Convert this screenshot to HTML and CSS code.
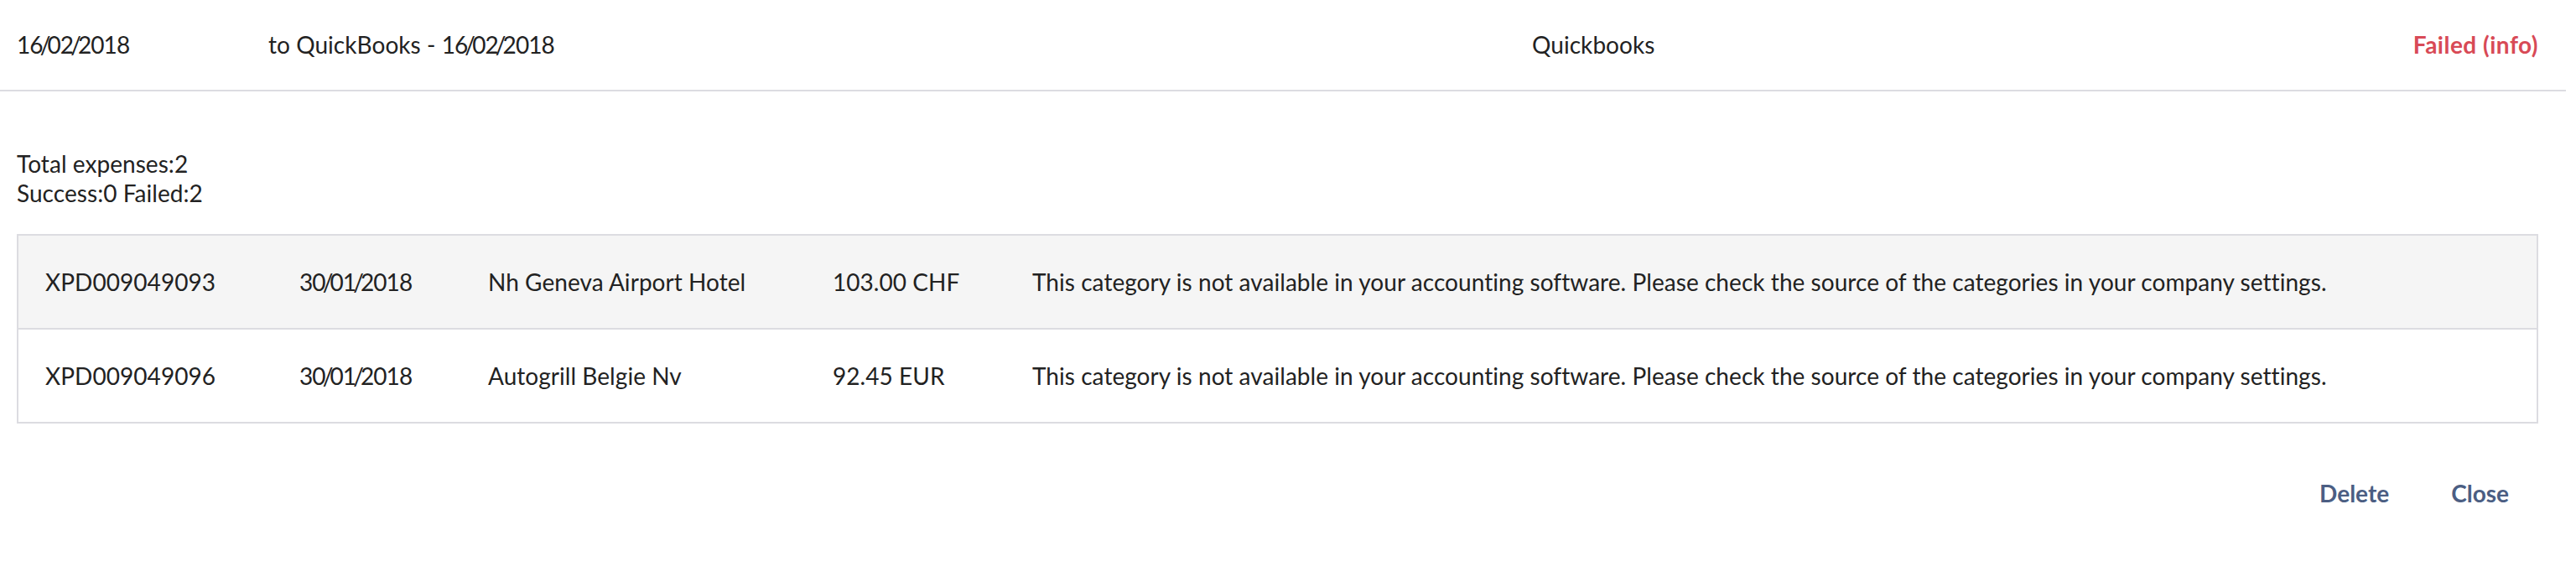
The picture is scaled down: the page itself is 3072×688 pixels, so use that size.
FILE: index.html
```html
<!DOCTYPE html>
<html>
<head>
<meta charset="utf-8">
<link rel="stylesheet" href="styles.css">
</head>
<body>
<div class="page">
  <div class="export-row">
    <div class="cell"><span class="date">16<span class="sl">/</span>02<span class="sl">/</span>2018</span></div>
    <div class="cell">to QuickBooks - <span class="date">16<span class="sl">/</span>02<span class="sl">/</span>2018</span></div>
    <div class="cell">Quickbooks</div>
    <div class="cell status">Failed (info)</div>
  </div>
  <div class="details">
    <div class="summary">
      <div>Total expenses:2</div>
      <div>Success:0 Failed:2</div>
    </div>
    <div class="table">
      <div class="row shaded">
        <div>XPD009049093</div>
        <div><span class="date">30<span class="sl">/</span>01<span class="sl">/</span>2018</span></div>
        <div>Nh Geneva Airport Hotel</div>
        <div>103.00 CHF</div>
        <div>This category is not available in your accounting software. Please check the source of the categories in your company settings.</div>
      </div>
      <div class="row">
        <div>XPD009049096</div>
        <div><span class="date">30<span class="sl">/</span>01<span class="sl">/</span>2018</span></div>
        <div>Autogrill Belgie Nv</div>
        <div>92.45 EUR</div>
        <div>This category is not available in your accounting software. Please check the source of the categories in your company settings.</div>
      </div>
    </div>
    <div class="actions">
      <button class="btn">Delete</button>
      <button class="btn">Close</button>
    </div>
  </div>
</div>
</body>
</html>
```
FILE: styles.css
```css
html, body {
  margin: 0;
  padding: 0;
  background: #ffffff;
}
body {
  font-family: Lato, "Liberation Sans", sans-serif;
  font-size: 28px;
  color: #222222;
  letter-spacing: 0.05px;
}
.date {
  letter-spacing: -0.9px;
}
.sl {
  margin: 0 -3px;
}
.page {
  width: 3060px;
}
.export-row {
  display: grid;
  grid-template-columns: 300px 1507px auto 1fr;
  align-items: center;
  height: 107px;
  padding: 0 33px 0 20px;
  border-bottom: 2px solid #dcdce1;
}
.export-row .cell {
  margin-top: -2px;
}
.status {
  text-align: right;
  color: #d84a56;
  font-weight: 700;
  letter-spacing: 0.5px;
}
.details {
  padding: 0 33px 0 20px;
}
.summary {
  margin-top: 69px;
  line-height: 35px;
}
.table {
  margin-top: 31px;
  border: 2px solid #dcdce1;
}
.row {
  display: grid;
  grid-template-columns: 303px 225px 411px 238px 1fr;
  align-items: center;
  height: 110px;
  padding-left: 32px;
}
.row + .row {
  border-top: 2px solid #dcdce1;
}
.row.shaded {
  background: #f5f5f5;
}
.actions {
  display: flex;
  justify-content: flex-end;
  gap: 4px;
  margin-top: 48px;
}
.btn {
  font-family: inherit;
  font-size: 28px;
  font-weight: 700;
  color: #4b5e83;
  background: none;
  border: none;
  height: 70px;
  padding: 0 35px;
}
```
